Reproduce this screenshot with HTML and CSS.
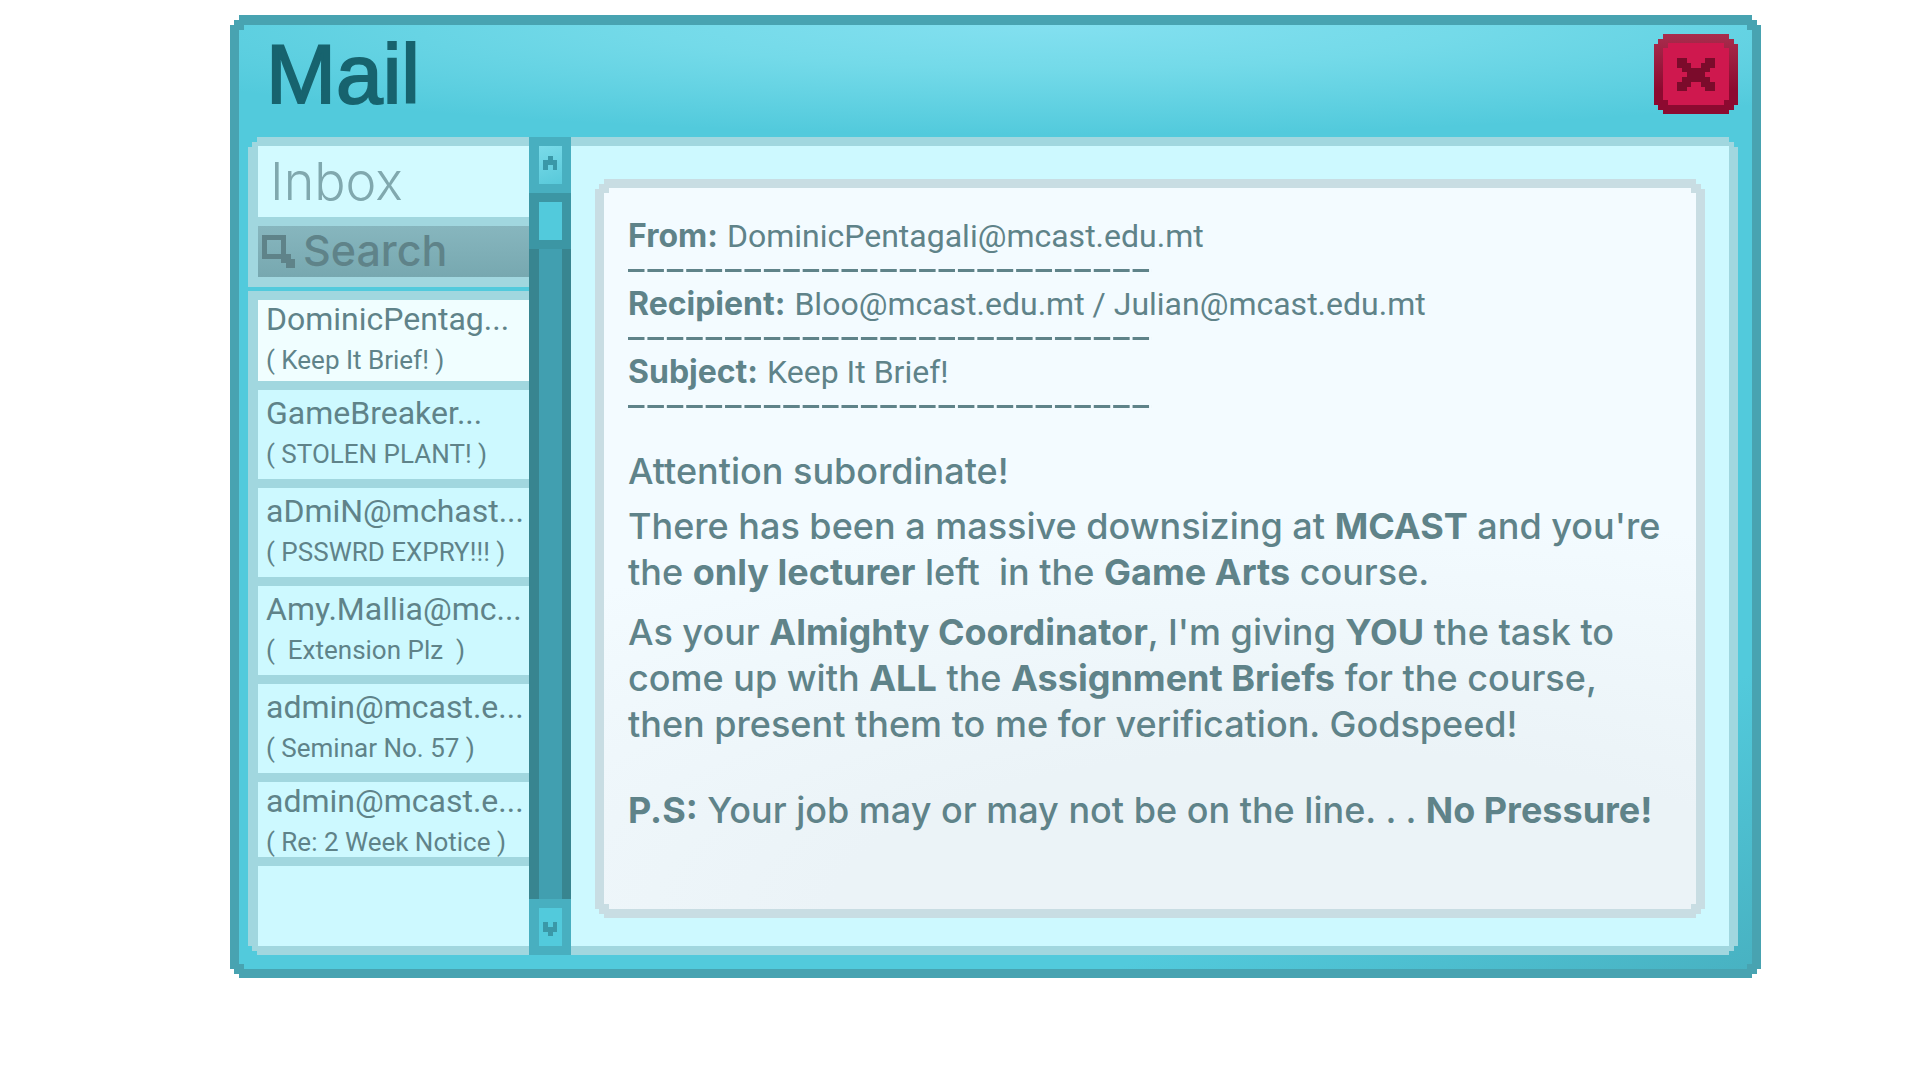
FILE: index.html
```html
<!DOCTYPE html>
<html lang="en">
<head>
<meta charset="utf-8">
<title>Mail</title>
<link rel="stylesheet" href="styles.css">
</head>
<body>
<main class="window step-out">
  <div class="window-body step-in">
    <header class="titlebar">
      <h1 class="title">Mail</h1>
      <button class="close step-out" type="button" aria-label="Close">
        <span class="close-face step-in">
          <svg class="close-icon" viewBox="0 0 38 33" shape-rendering="crispEdges" aria-hidden="true"><path d="M0 0h10v5h4v5h10V5h4V0h10v10h-5v4h-5v5h5v5h5v9H28v-4h-4v-5H14v5h-4v4H0v-9h5v-5h5v-5H5v-4H0z"/></svg>
        </span>
      </button>
    </header>
    <div class="panes step-out">
      <aside class="sidebar">
        <section class="top-box">
          <h2 class="inbox">Inbox</h2>
          <label class="search">
            <svg class="search-icon" viewBox="0 0 33 33" shape-rendering="crispEdges" aria-hidden="true"><path fill-rule="evenodd" d="M0 0h24v19h5v5h4v9h-9v-5h-5v-4H0zM5 5v14h14V5z"/></svg>
            <input class="search-input" type="search" placeholder="Search" aria-label="Search mail">
          </label>
        </section>
        <div class="divider"></div>
        <nav class="list" aria-label="Messages">
          <a class="item selected" href="#m1"><span class="sender">DominicPentag...</span><span class="topic">( Keep It Brief! )</span></a>
          <a class="item" href="#m2"><span class="sender">GameBreaker...</span><span class="topic">( STOLEN PLANT! )</span></a>
          <a class="item" href="#m3"><span class="sender">aDmiN@mchast...</span><span class="topic">( PSSWRD EXPRY!!! )</span></a>
          <a class="item" href="#m4"><span class="sender">Amy.Mallia@mc...</span><span class="topic">(&nbsp; Extension Plz&nbsp; )</span></a>
          <a class="item" href="#m5"><span class="sender">admin@mcast.e...</span><span class="topic">( Seminar No. 57 )</span></a>
          <a class="item last" href="#m6"><span class="sender">admin@mcast.e...</span><span class="topic">( Re: 2 Week Notice )</span></a>
          <div class="empty"></div>
        </nav>
      </aside>
      <div class="scrollbar">
        <button class="arrow" type="button" aria-label="Scroll up"><svg class="arrow-icon" viewBox="0 0 14 14" shape-rendering="crispEdges" aria-hidden="true"><path d="M5 0h5v4h4v10h-4V9H5v5H0V4h5z"/></svg></button>
        <div class="track"><div class="thumb"></div></div>
        <button class="arrow down" type="button" aria-label="Scroll down"><svg class="arrow-icon" viewBox="0 0 14 14" shape-rendering="crispEdges" aria-hidden="true"><path d="M5 14h5v-4h4V0h-4v5H5V0H0v10h5z"/></svg></button>
      </div>
      <div class="reader">
        <article class="paper step-out">
          <div class="paper-face step-in">
            <p class="meta"><b>From:</b> <span class="value">DominicPentagali@mcast.edu.mt</span></p>
            <hr class="dashes">
            <p class="meta"><b>Recipient:</b> <span class="value">Bloo@mcast.edu.mt / Julian@mcast.edu.mt</span></p>
            <hr class="dashes">
            <p class="meta"><b>Subject:</b> <span class="value">Keep It Brief!</span></p>
            <hr class="dashes">
            <div class="letter">
              <p>Attention subordinate!</p>
              <p>There has been a massive downsizing at <b>MCAST</b> and you're<br>the <b>only lecturer</b> left&nbsp; in the <b>Game Arts</b> course.</p>
              <p class="spaced">As your <b>Almighty Coordinator</b>, I'm giving <b>YOU</b> the task to<br>come up with <b>ALL</b> the <b>Assignment Briefs</b> for the course,<br>then present them to me for verification. Godspeed!</p>
              <p class="ps"><b>P.S:</b> Your job may or may not be on the line. . . <b>No Pressure!</b></p>
            </div>
          </div>
        </article>
      </div>
    </div>
  </div>
</main>
</body>
</html>
```
FILE: styles.css
```css
* { box-sizing: border-box; }

:root {
  --ink: #5f8389;
  --edge: #a1d7df;
  --ice: #cdf9ff;
}

body {
  margin: 0;
  padding-top: 15px;
  display: grid;
  grid-template-columns: 230fr 1531fr 159fr;
  background: #fff;
  color: var(--ink);
  font-family: Inter, "Liberation Sans", sans-serif;
}

h1, h2, p { margin: 0; }
button { border: 0; padding: 0; font: inherit; cursor: pointer; }

/* Stepped pixel corners */
.step-out {
  clip-path: polygon(
    0 10px, 4px 10px, 4px 5px, 9px 5px, 9px 0,
    calc(100% - 9px) 0, calc(100% - 9px) 5px, calc(100% - 4px) 5px, calc(100% - 4px) 10px, 100% 10px,
    100% calc(100% - 9px), calc(100% - 4px) calc(100% - 9px), calc(100% - 4px) calc(100% - 4px), calc(100% - 9px) calc(100% - 4px), calc(100% - 9px) 100%,
    9px 100%, 9px calc(100% - 4px), 4px calc(100% - 4px), 4px calc(100% - 9px), 0 calc(100% - 9px));
}
.step-in {
  clip-path: polygon(
    0 5px, 5px 5px, 5px 0, calc(100% - 5px) 0, calc(100% - 5px) 5px, 100% 5px,
    100% calc(100% - 5px), calc(100% - 5px) calc(100% - 5px), calc(100% - 5px) 100%,
    5px 100%, 5px calc(100% - 5px), 0 calc(100% - 5px));
}

.window {
  grid-column: 2;
  padding: 10px 9px 9px;
  background: #48a3b1;
}
.window-body {
  padding: 0 14px 14px 9px;
  background:
    radial-gradient(ellipse 68% 110px at 54% 0, #83e0f0 0, #7cdeeccc 40%, #52cadc00 100%),
    linear-gradient(155deg, #52cadc 82%, #48b2c2 100%);
}

.titlebar {
  height: 112px;
  display: flex;
  justify-content: space-between;
  align-items: flex-start;
  padding: 9px 0 0 18px;
}
.title {
  color: #17636e;
  font: 400 84px/80px "Liberation Sans", sans-serif;
  -webkit-text-stroke: 2px #17636e;
}
.close {
  width: 84px;
  height: 80px;
  padding: 9px;
  background: linear-gradient(#a92d4d, #8c0a30 70%);
}
.close-face {
  display: grid;
  place-items: center;
  height: 100%;
  background: #cf184e;
}
.close-icon { width: 38px; height: 33px; fill: #7b0b2b; }

.panes {
  display: grid;
  grid-template-columns: 281px 42px 1fr;
  background: var(--edge);
}

.sidebar {
  display: flex;
  flex-direction: column;
}
.top-box { padding: 9px 0 10px 10px; }
.inbox {
  height: 71px;
  margin-bottom: 9px;
  padding-left: 12px;
  background: #d2faff;
  color: #80a8ae;
  font-size: 52px;
  line-height: 71px;
  font-weight: 300;
}
.search {
  display: flex;
  align-items: center;
  gap: 8px;
  height: 51px;
  padding-left: 4px;
  background: linear-gradient(#87b6be, #77a8b0);
}
.search-icon { flex: none; width: 33px; height: 33px; fill: var(--ink); }
.search-input {
  flex: 1;
  min-width: 0;
  border: 0;
  padding: 0 0 4px;
  background: none;
  color: var(--ink);
  font: 500 43px/46px Inter, "Liberation Sans", sans-serif;
}
.search-input::placeholder { color: var(--ink); opacity: 1; }
.divider { height: 4px; background: #52cadc; }

.list {
  flex: 1;
  display: flex;
  flex-direction: column;
  gap: 9px;
  padding: 9px 0 9px 10px;
  font-family: Roboto, "Liberation Sans", sans-serif;
}
.item {
  height: 89px;
  padding: 4px 0 0 8px;
  background: var(--ice);
  color: inherit;
  text-decoration: none;
  white-space: nowrap;
}
.item.selected { height: 81px; padding-top: 0; background: #f0feff; }
.item.last { height: 75px; padding-top: 0; }
.sender, .topic { display: block; }
.sender { font-size: 32px; line-height: 38px; }
.topic { font-size: 26px; line-height: 44px; }
.empty { flex: 1; min-height: 80px; background: var(--ice); }

.scrollbar {
  display: flex;
  flex-direction: column;
  background: #3a8893;
}
.arrow {
  display: grid;
  place-items: start;
  height: 56px;
  padding: 10px 0 0 4px;
  border: solid #48afc0;
  border-width: 9px 9px 9px 10px;
  background: linear-gradient(160deg, #7adbe9, #58c9da);
}
.arrow.down { padding-top: 14px; background: #52cadc; }
.arrow-icon { width: 14px; height: 14px; fill: #3a98a8; }
.track {
  flex: 1;
  background: linear-gradient(90deg, #388590 10px, #419fb0 10px 33px, #388590 33px);
}
.thumb {
  height: 56px;
  border: solid #3c96a4;
  border-width: 9px 9px 9px 10px;
  background: #52cadc;
}

.reader {
  margin: 9px 9px 9px 0;
  padding: 33px 24px 28px;
  background: var(--ice);
}
.paper {
  height: 100%;
  padding: 9px;
  background: #c8dde3;
}
.paper-face {
  height: 100%;
  padding: 28px 20px 75px 24px;
  background: radial-gradient(ellipse 110% 55% at 65% 100%, #ebf3f7 40%, #f3fbff 100%);
}
.meta {
  font-size: 32px;
  line-height: 40px;
}
.value {
  font-family: Roboto, "Liberation Sans", sans-serif;
}
.dashes {
  width: 524px;
  height: 3px;
  margin: 13px 0 12px;
  border: 0;
  background: linear-gradient(90deg, var(--ink) 83%, transparent 83%) 0 0 / calc(100% / 27) 100%;
}
.letter {
  padding-top: 28px;
  font-size: 36px;
  line-height: 46px;
  font-weight: 500;
  white-space: nowrap;
}
.letter p + p { margin-top: 9px; }
.letter p.spaced { margin-top: 14px; }
.letter p.ps { margin-top: 40px; }
```
